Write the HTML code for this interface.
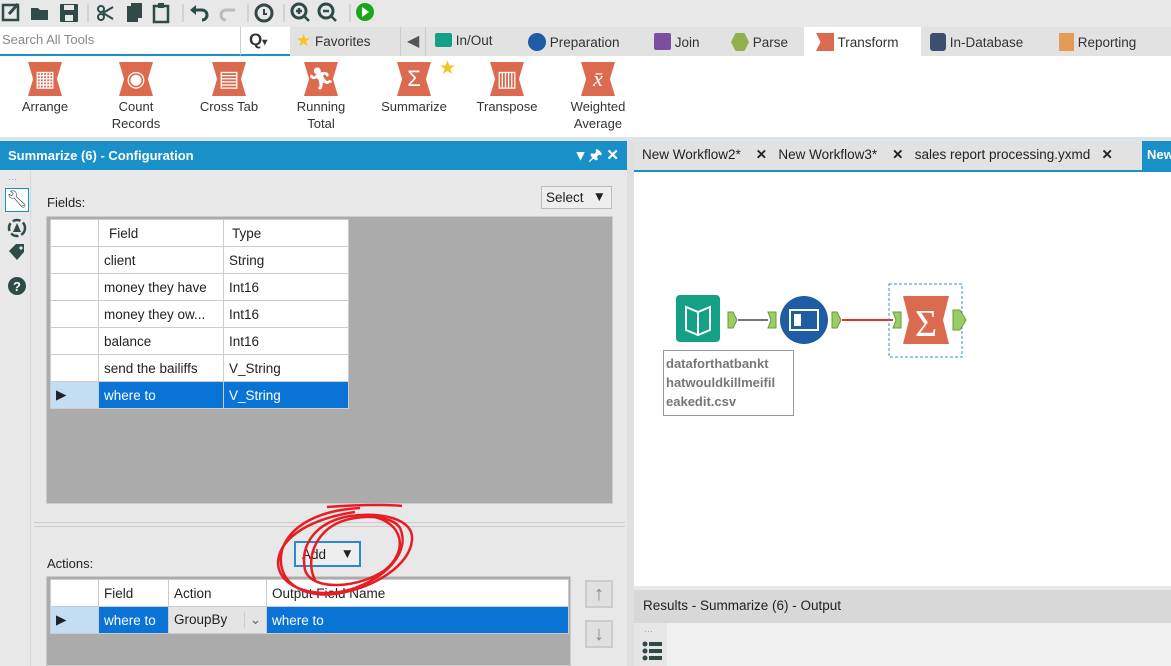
<!DOCTYPE html>
<html><head><meta charset="utf-8"><style>
*{box-sizing:border-box;margin:0;padding:0}
body{width:1171px;height:666px;overflow:hidden;background:#e8e8e8;font-family:"Liberation Sans",sans-serif;font-size:13px;color:#222;position:relative}
.a{position:absolute}
.tab{position:absolute;top:33px;font-size:13.5px;color:#333}
.tool{position:absolute;top:62px;text-align:center;font-size:13px;color:#333;line-height:17px}
.ic{width:34px;height:34px;margin:0 auto 2px;background:#dc6a4e;clip-path:polygon(0 0,100% 0,85% 50%,100% 100%,0 100%,15% 50%);color:#fff;font-size:22px;line-height:34px}
table{border-collapse:collapse;position:absolute;background:#fff}
td{border:1px solid #ccc;height:27px;padding-left:5px;font-size:13.5px}
td.s{background:#0a74d6;color:#fff}
td.h{background:#c3def2}
</style></head><body>
<svg class="a" style="left:0;top:0" width="380" height="27" fill="#2f4a47" stroke="#2f4a47">
<rect x="3" y="5" width="15" height="15" fill="none" stroke-width="2.5"/><path d="M9 14l9-10" stroke-width="3"/>
<path d="M31 8h7l2 2h8v10h-17z" stroke="none"/>
<rect x="60" y="4" width="18" height="18" rx="1" stroke="none"/><rect x="64" y="5" width="10" height="5" fill="#e8e8e8" stroke="none"/><rect x="65" y="15" width="8" height="6" fill="#e8e8e8" stroke="none"/>
<line x1="88" y1="4" x2="88" y2="22" stroke="#bbb"/>
<circle cx="101" cy="17" r="3" fill="none" stroke-width="2"/><circle cx="101" cy="9" r="3" fill="none" stroke-width="2"/><path d="M103 13l10-6M103 13l10 6" stroke-width="2"/>
<rect x="127" y="6" width="11" height="16" stroke="none"/><rect x="131" y="3" width="11" height="15" stroke="none"/>
<rect x="154" y="6" width="14" height="16" fill="none" stroke-width="2.5"/><rect x="158" y="3" width="6" height="5" stroke="none"/>
<line x1="183" y1="4" x2="183" y2="22" stroke="#bbb"/>
<path d="M193 10h9a5 5 0 0 1 0 10" fill="none" stroke-width="3"/><path d="M190 10l6-5v10z" stroke="none"/>
<path d="M235 10h-9a5 5 0 0 0 0 10" fill="none" stroke="#bbb" stroke-width="3"/>
<line x1="248" y1="4" x2="248" y2="22" stroke="#bbb"/>
<circle cx="264" cy="13" r="8" fill="none" stroke-width="3"/><path d="M264 9v5h3" fill="none" stroke-width="2"/>
<line x1="284" y1="4" x2="284" y2="22" stroke="#bbb"/>
<circle cx="299" cy="11" r="7" fill="none" stroke-width="3"/><path d="M304 16l5 5M296 11h6M299 8v6" stroke-width="2.5"/>
<circle cx="326" cy="11" r="7" fill="none" stroke-width="3"/><path d="M331 16l5 5M323 11h6" stroke-width="2.5"/>
<line x1="350" y1="4" x2="350" y2="22" stroke="#bbb"/>
<circle cx="365" cy="12" r="9" fill="#1aa81a" stroke="none"/><path d="M362 7l7 5-7 5z" fill="#fff" stroke="none"/>
</svg>
<div class="a" style="left:0;top:27px;width:1171px;height:29px;background:#e2e2e2"></div>
<div class="a" style="left:0;top:27px;width:240px;height:29px;background:#fff;border-bottom:2px solid #1a90c8;color:#888;font-size:13px;padding:5px 2px">Search All Tools</div>
<div class="a" style="left:240px;top:27px;width:50px;height:29px;background:#fff;border-left:1px solid #ccc;border-bottom:2px solid #1a90c8;font-weight:bold;font-size:17px;padding:3px 8px;color:#333">Q<span style="font-size:10px">▾</span></div>
<div class="tab" style="left:296px;top:31px"><span style="color:#f5c518;font-size:17px">★</span> Favorites</div>
<div class="a" style="left:400px;top:27px;width:26px;height:29px;border-left:1px solid #ccc;border-right:1px solid #ccc;color:#555;font-size:16px;padding:4px 6px">◀</div>
<div class="tab" style="left:435px"><span style="display:inline-block;width:17px;height:14px;background:#13a085;vertical-align:-2px;border-radius:2px"></span> In/Out</div>
<div class="tab" style="left:528px"><span style="display:inline-block;width:18px;height:18px;background:#1e5ca3;border-radius:50%;vertical-align:-4px"></span> Preparation</div>
<div class="tab" style="left:654px"><span style="display:inline-block;width:17px;height:17px;background:#7b4fa0;border-radius:2px;vertical-align:-3px"></span> Join</div>
<div class="tab" style="left:731px"><span style="display:inline-block;width:18px;height:18px;background:#94b04e;clip-path:polygon(25% 0,75% 0,100% 50%,75% 100%,25% 100%,0 50%);vertical-align:-4px"></span> Parse</div>
<div class="a" style="left:804px;top:27px;width:117px;height:29px;background:#fff"></div>
<div class="tab" style="left:816px"><span style="display:inline-block;width:18px;height:18px;background:#dc6a4e;clip-path:polygon(0 0,100% 0,100% 100%,0 100%,25% 50%);vertical-align:-4px"></span> Transform</div>
<div class="tab" style="left:930px"><span style="display:inline-block;width:16px;height:18px;background:#3d4f6e;border-radius:3px;vertical-align:-4px"></span> In-Database</div>
<div class="tab" style="left:1059px"><span style="display:inline-block;width:15px;height:18px;background:#e39b56;vertical-align:-4px"></span> Reporting</div>
<div class="a" style="left:0;top:56px;width:1171px;height:83px;background:#fff"></div>
<div class="tool" style="left:10px;width:70px"><div class="ic">▦</div>Arrange</div>
<div class="tool" style="left:100px;width:72px"><div class="ic">◉</div>Count<br>Records</div>
<div class="tool" style="left:192px;width:74px"><div class="ic">▤</div>Cross Tab</div>
<div class="tool" style="left:286px;width:70px"><div class="ic">🏃︎</div>Running<br>Total</div>
<div class="tool" style="left:376px;width:76px"><div class="ic">Σ</div>Summarize</div>
<div class="a" style="left:439px;top:57px;color:#f5c518;font-size:19px">★</div>
<div class="tool" style="left:470px;width:74px"><div class="ic">▥</div>Transpose</div>
<div class="tool" style="left:562px;width:72px"><div class="ic" style="font-family:'Liberation Serif';font-style:italic">x̄</div>Weighted<br>Average</div>
<div class="a" style="left:0;top:137px;width:1171px;height:4px;background:#dde4ea"></div>
<div class="a" style="left:0;top:141px;width:627px;height:29px;background:#1a90c8;color:#fff;font-weight:bold;font-size:13px;padding:7px 8px">Summarize (6) - Configuration<span style="position:absolute;right:8px;top:4px;font-size:15px">▾ 🖈 ✕</span></div>
<div class="a" style="left:30px;top:170px;width:597px;height:496px;background:#e8e8e8;border-left:1px solid #d8d8d8"></div>
<div class="a" style="left:8px;top:174px;color:#999;font-size:9px">···</div>
<div class="a" style="left:5px;top:188px;width:24px;height:24px;border:1px solid #1a90c8;background:#fff;color:#2f4a47;font-size:17px;text-align:center;line-height:22px">🔧︎</div>
<svg class="a" style="left:6px;top:218px" width="22" height="80" fill="#2f4a47"><circle cx="11" cy="10" r="8" fill="none" stroke="#2f4a47" stroke-width="2.5" stroke-dasharray="8 3"/><path d="M7 14l4-9 4 9z"/><path d="M3 33l7-7h8v8l-7 8z"/><circle cx="15" cy="30" r="1.6" fill="#e8e8e8"/><circle cx="11" cy="68" r="9"/><text x="11" y="73" fill="#fff" font-size="13" font-weight="bold" text-anchor="middle" font-family="Liberation Sans">?</text></svg>
<div class="a" style="left:47px;top:195px">Fields:</div>
<div class="a" style="left:541px;top:186px;width:71px;height:23px;border:1px solid #bbb;background:#eee;padding:3px 4px;font-size:13.5px">Select <span style="position:absolute;right:5px;top:2px">▼</span></div>
<div class="a" style="left:46px;top:216px;width:567px;height:288px;background:#ababab;border:1px solid #ccc"></div>
<table style="left:50px;top:219px">
<tr><td style="width:48px;height:25px"></td><td style="width:125px;padding-left:10px">Field</td><td style="width:125px;padding-left:8px">Type</td></tr>
<tr><td></td><td>client</td><td>String</td></tr>
<tr><td></td><td>money they have</td><td>Int16</td></tr>
<tr><td></td><td>money they ow...</td><td>Int16</td></tr>
<tr><td></td><td>balance</td><td>Int16</td></tr>
<tr><td></td><td>send the bailiffs</td><td>V_String</td></tr>
<tr><td class="h">▶</td><td class="s">where to</td><td class="s">V_String</td></tr>
</table>
<div class="a" style="left:34px;top:522px;width:591px;height:5px;border-top:1px solid #ccc;border-bottom:1px solid #ccc"></div>
<div class="a" style="left:47px;top:556px">Actions:</div>
<div class="a" style="left:294px;top:541px;width:67px;height:26px;border:2px solid #2a88d8;background:#eee;padding:4px 6px;font-size:13.5px">Add <span style="position:absolute;right:5px;top:3px">▼</span></div>
<div class="a" style="left:46px;top:576px;width:525px;height:90px;background:#ababab;border:1px solid #ccc"></div>
<table style="left:50px;top:579px">
<tr><td style="width:48px;height:25px"></td><td style="width:70px">Field</td><td style="width:98px">Action</td><td style="width:302px">Output Field Name</td></tr>
<tr><td class="h">▶</td><td class="s">where to</td><td style="background:#e4e4e4">GroupBy<span style="float:right;border-left:1px solid #ccc;width:22px;text-align:center;color:#666">⌄</span></td><td class="s">where to</td></tr>
</table>
<div class="a" style="left:585px;top:580px;width:28px;height:28px;border:2px solid #ccc;background:#e0e0e0;color:#888;font-size:20px;text-align:center;line-height:24px;font-weight:bold">↑</div>
<div class="a" style="left:585px;top:620px;width:28px;height:28px;border:2px solid #ccc;background:#e0e0e0;color:#888;font-size:20px;text-align:center;line-height:24px;font-weight:bold">↓</div>
<svg class="a" style="left:260px;top:500px" width="170" height="110" fill="none" stroke="#e81c24" stroke-width="2.5">
<path d="M67 7C105 4 135 5 142 6"/>
<path d="M100 8C60 10 30 25 22 50C15 80 40 98 75 94C115 88 150 65 152 40C154 18 120 12 90 16C55 22 40 45 45 70C52 92 100 88 125 70C148 52 145 22 110 16"/>
<path d="M95 12C55 18 20 35 18 62C18 90 60 100 95 88C130 75 150 50 140 28C132 15 100 14 80 22C55 32 45 60 55 80"/>
</svg>
<div class="a" style="left:627px;top:141px;width:7px;height:525px;background:#e0e0e0"></div>
<div class="a" style="left:634px;top:141px;width:537px;height:29px;background:#e2e2e2"></div>
<div class="a" style="left:642px;top:147px;font-size:13.5px;color:#222">New Workflow2*&nbsp;&nbsp;&nbsp; <b>✕</b>&nbsp;&nbsp; New Workflow3*&nbsp;&nbsp;&nbsp; <b>✕</b>&nbsp;&nbsp; sales report processing.yxmd&nbsp;&nbsp; <b>✕</b></div>
<div class="a" style="left:1142px;top:141px;width:29px;height:29px;background:#1a90c8;color:#fff;font-weight:bold;padding:6px 5px;overflow:hidden;white-space:nowrap">New</div>
<div class="a" style="left:634px;top:170px;width:537px;height:2px;background:#1a90c8"></div>
<div class="a" style="left:634px;top:172px;width:537px;height:414px;background:#fff"></div>
<svg class="a" style="left:660px;top:280px" width="320" height="140">
<rect x="16" y="15" width="44" height="47" rx="4" fill="#13a085"/>
<path d="M26 27v23l12 5 12-5v-23l-12 5z" fill="none" stroke="#fff" stroke-width="2"/><path d="M38 32v23" stroke="#fff" stroke-width="2"/>
<path d="M68 32h5l4 8-4 8h-5z" fill="#9ccc65" stroke="#6a9b3a"/>
<line x1="78" y1="40" x2="108" y2="40" stroke="#777" stroke-width="2"/>
<path d="M108 32h8v16h-8l3-8z" fill="#9ccc65" stroke="#6a9b3a"/>
<circle cx="144" cy="40" r="24" fill="#1e5ca3"/><rect x="130" y="30" width="28" height="20" fill="none" stroke="#fff" stroke-width="2"/><rect x="134" y="34" width="7" height="12" fill="#fff"/>
<path d="M172 32h5l4 8-4 8h-5z" fill="#9ccc65" stroke="#6a9b3a"/>
<line x1="182" y1="40" x2="233" y2="40" stroke="#e83030" stroke-width="2"/>
<path d="M233 32h8v16h-8l3-8z" fill="#9ccc65" stroke="#6a9b3a"/>
<rect x="229" y="4" width="73" height="73" fill="none" stroke="#3a8ee6" stroke-dasharray="3 2"/>
<path d="M243 16h46l-6 24 6 24h-46l6-24z" fill="#dc6a4e"/><text x="266" y="56" fill="#fff" font-size="38" text-anchor="middle" font-family="Liberation Serif">Σ</text>
<path d="M293 30h7l6 10-6 10h-7z" fill="#9ccc65" stroke="#6a9b3a"/>
<rect x="3.5" y="70.5" width="130" height="65" fill="#fff" stroke="#999"/>
<text font-family="Liberation Sans" font-size="13" font-weight="bold" fill="#777"><tspan x="6" y="88">dataforthatbankt</tspan><tspan x="6" y="107">hatwouldkillmeifil</tspan><tspan x="6" y="126">eakedit.csv</tspan></text>
</svg>
<div class="a" style="left:634px;top:586px;width:537px;height:4px;background:#e8e8e8"></div>
<div class="a" style="left:634px;top:590px;width:537px;height:33px;background:#d8d8d8;padding:8px 9px;font-size:13.5px">Results - Summarize (6) - Output</div>
<div class="a" style="left:634px;top:623px;width:537px;height:43px;background:#f0f0f0"></div>
<div class="a" style="left:634px;top:623px;width:33px;height:43px;background:#e6e6e6"></div>
<div class="a" style="left:644px;top:626px;color:#999;font-size:9px">···</div>
<svg class="a" style="left:642px;top:640px" width="22" height="22" fill="#2f4a47"><circle cx="3" cy="4" r="2.5"/><rect x="7" y="2" width="13" height="4"/><circle cx="3" cy="11" r="2.5"/><rect x="7" y="9" width="13" height="4"/><circle cx="3" cy="18" r="2.5"/><rect x="7" y="16" width="13" height="4"/></svg>
</body></html>
